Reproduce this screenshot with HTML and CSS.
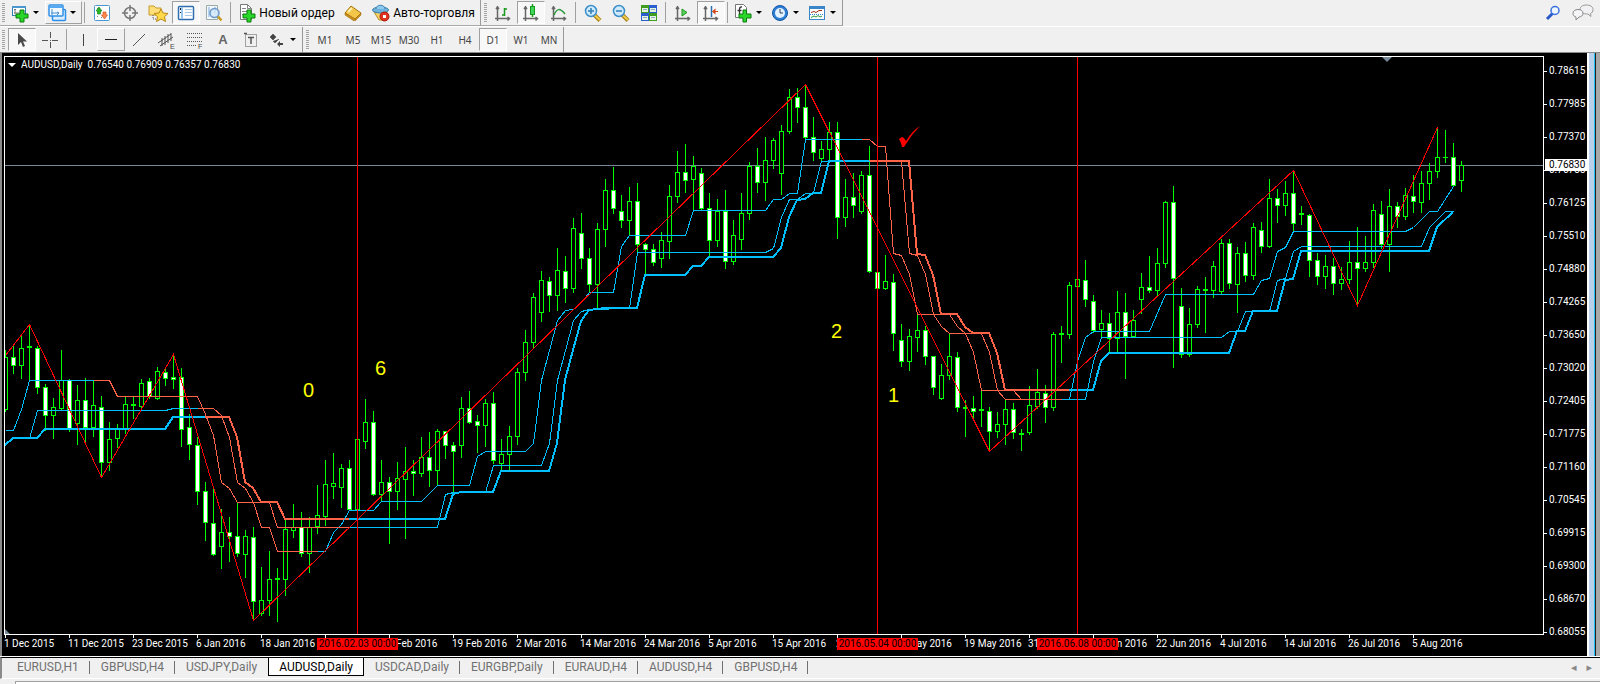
FILE: index.html
```html
<!DOCTYPE html>
<html lang="ru">
<head>
<meta charset="utf-8">
<title>AUDUSD,Daily</title>
<link rel="stylesheet" href="styles.css">
</head>
<body>
<header class="toolbars">
  <div class="toolbar">
    <div class="group">
      <span class="grip"></span>
      <button class="tool drop" aria-label="Новый график"><svg width="18" height="18"><rect x="1.500" y="2.500" width="13" height="9" fill="#fff" stroke="#2f7fb5"/><rect x="1" y="2" width="14" height="2" fill="#4a98cf"/><path d="M4 5v5M3 9h8M3 6l1-1 1 1" stroke="#777" fill="none"/><path d="M9 6h4v4h4v4h-4v4H9v-4H5v-4h4z" fill="#2bd62b" stroke="#0b7d0b"/></svg><i class="arrow"></i></button>
      <button class="tool drop raised" aria-label="Профили"><svg width="18" height="18"><rect x="4.500" y="5.500" width="13" height="11" rx="1" fill="#d9efff" stroke="#2f8fe8" stroke-width="1.500"/><rect x="1" y="1" width="14" height="11" rx="1" fill="#f0f9ff" stroke="#2f8fe8" stroke-width="1.500"/><path d="M1 3h14" stroke="#55a9ee" stroke-width="2"/><path d="M4 5v6M3 9h8M9 8l2 1-2 2" stroke="#4a90cc" fill="none"/></svg><i class="arrow"></i></button>
      <span class="sep"></span>
      <button class="tool" aria-label="Обзор рынка"><svg width="18" height="18"><rect x="1.500" y="1.500" width="15" height="15" rx="1" fill="#fff" stroke="#4a98cf"/><path d="M4 4.500h1M4 12.500h1M8 13.500h1" stroke="#888"/><path d="M3 7l3-4 3 4H7.500v3h-3V7z" fill="#2ab52a" stroke="#0b7d0b" stroke-width=".6"/><path d="M8.500 11l3 4 3-4H13V8h-3v3z" fill="#ff8a4a" stroke="#d04010" stroke-width=".6"/></svg></button>
      <button class="tool" aria-label="Окно данных"><svg width="18" height="18" fill="none" stroke="#777" stroke-width="1.500"><circle cx="9" cy="9" r="5.500"/><path d="M9 1v6M9 11v6M1 9h6M11 9h6"/></svg></button>
      <button class="tool" aria-label="Навигатор"><svg width="20" height="18"><path d="M1 2h5l2 2h5v7H1z" fill="#ffdf7a" stroke="#c79a2c"/><path d="M5 11v4h4" stroke="#555" stroke-dasharray="1 1" fill="none"/><path d="M13 5l2 4 5 .5-3.500 3.200 1 4.800-4.500-2.500-4.500 2.500 1-4.800L6 9.500 11 9z" fill="#ffd94a" stroke="#b98714"/></svg></button>
      <button class="tool pressed" aria-label="Терминал"><svg width="18" height="18"><rect x="1.500" y="2.500" width="15" height="13" rx="1" fill="#fff" stroke="#2f6fb0" stroke-width="1.500"/><path d="M5 3v12" stroke="#9bc7ee" stroke-width="2"/><path d="M3.500 4v2M3.500 8v1" stroke="#123"/><path d="M8 5.500h7M8 8.500h7M8 11.500h7" stroke="#a9c9e8"/></svg></button>
      <button class="tool" aria-label="Тестер стратегий"><svg width="18" height="18"><path d="M1.500 1.500h11v14h-11z" fill="#f4f8fc" stroke="#9aa"/><path d="M4 3v10M10 3v6" stroke="#7ad"/><circle cx="9.500" cy="9" r="4.500" fill="#cfe6fb" fill-opacity=".8" stroke="#6c98c8" stroke-width="1.500"/><path d="M13 12.500l3.500 4" stroke="#c99a22" stroke-width="2.500"/></svg></button>
      <span class="sep"></span>
      <button class="tool text order"><svg width="18" height="18"><path d="M2.500.5h7l4 4v11h-11z" fill="#fff" stroke="#777"/><path d="M9.500.5v4h4M4 4.500h4M4 7.500h7M4 10.500h5" stroke="#888" fill="none"/><path d="M9 6h4v4h4v4h-4v4H9v-4H5v-4h4z" fill="#2bd62b" stroke="#0b7d0b"/></svg><span>Новый ордер</span></button>
      <button class="tool" aria-label="MetaEditor"><svg width="18" height="18"><path d="M1 9l6-7 10 7-6 6z" fill="#f3c64a" stroke="#a87412"/><path d="M1 9v2l9 6 1-2zM11 15l6-6v2l-6 6z" fill="#c98f1d" stroke="#a87412" stroke-width=".6"/><path d="M4 8l4-4" stroke="#fff0b0" stroke-width="2"/></svg></button>
      <button class="tool text auto"><svg width="18" height="18"><path d="M2 8h13l-3 8H7z" fill="#f5d36b" stroke="#b98a1f"/><ellipse cx="8.500" cy="6" rx="8" ry="3" fill="#6fb3dc" stroke="#3a7fac"/><path d="M4 5c0-5 9-5 9 0" fill="#8ccaf0" stroke="#3a7fac"/><circle cx="12.500" cy="12.500" r="4.500" fill="#e3311d" stroke="#a51b0c"/><path d="M11 11h3v3h-3z" fill="#fff"/></svg><span>Авто-торговля</span></button>
    </div>
    <div class="group">
      <span class="grip"></span>
      <button class="tool" aria-label="Бары"><svg width="18" height="18" fill="none" stroke="#666" stroke-width="1.500"><path d="M3.500 2v15M1 14.500h15M2 5l1.500-2L5 5M13.500 13l2 1.500-2 2"/><path d="M10.500 4v8M10 5h3M8 11h3" stroke="#1a9a1a"/></svg></button>
      <button class="tool pressed" aria-label="Свечи"><svg width="18" height="18" fill="none" stroke="#666" stroke-width="1.500"><path d="M3.500 2v15M1 14.500h15M2 5l1.500-2L5 5M13.500 13l2 1.500-2 2"/><path d="M10.500 0v13" stroke="#1a9a1a"/><rect x="8.500" y="2.500" width="4" height="8" fill="#3fd45c" stroke="#1a9a1a" stroke-width="1"/></svg></button>
      <button class="tool" aria-label="Линия"><svg width="18" height="18" fill="none" stroke="#666" stroke-width="1.500"><path d="M3.500 2v15M1 14.500h15M2 5l1.500-2L5 5M13.500 13l2 1.500-2 2"/><path d="M4 11c3-7 6-7 11-1" stroke="#2a9a3a"/></svg></button>
      <span class="sep"></span>
      <button class="tool" aria-label="Увеличить"><svg width="18" height="18"><path d="M10 10.500l6 6" stroke="#a8821c" stroke-width="4"/><path d="M10 10.500l6 5.500" stroke="#f0cc4a" stroke-width="2"/><circle cx="7" cy="7" r="5.500" fill="#cfeafc" stroke="#3b8fc9" stroke-width="1.500"/><path d="M4 7h6M7 4v6" stroke="#2f7fb8" stroke-width="1.500"/></svg></button>
      <button class="tool" aria-label="Уменьшить"><svg width="18" height="18"><path d="M10 10.500l6 6" stroke="#a8821c" stroke-width="4"/><path d="M10 10.500l6 5.500" stroke="#f0cc4a" stroke-width="2"/><circle cx="7" cy="7" r="5.500" fill="#cfeafc" stroke="#3b8fc9" stroke-width="1.500"/><path d="M4 7h6" stroke="#2f7fb8" stroke-width="1.500"/></svg></button>
      <button class="tool" aria-label="Окна мозаикой"><svg width="18" height="18"><path d="M1 1h8v8H1zM9 9h8v8H9z" fill="#3f9e1e"/><path d="M9 1h8v8H9zM1 9h8v8H1z" fill="#2b5fd0"/><path d="M2 4h6v4H2zM10 4h6v4h-6zM2 12h6v4H2zM10 12h6v4h-6z" fill="#e6f4e6"/><path d="M3 5.500h4M11 5.500h4M3 13.500h4M11 13.500h4" stroke="#8ab"/></svg></button>
      <span class="sep"></span>
      <button class="tool" aria-label="Автопрокрутка"><svg width="18" height="18" fill="none" stroke="#666" stroke-width="1.500"><path d="M3.500 2v15M1 14.500h15M2 5l1.500-2L5 5M13.500 13l2 1.500-2 2"/><path d="M8 5l5 3.500L8 12z" fill="#5fd05f" stroke="#1a9a1a" stroke-width="1"/></svg></button>
      <button class="tool pressed" aria-label="Сдвиг графика"><svg width="18" height="18" fill="none" stroke="#666" stroke-width="1.500"><path d="M3.500 2v15M1 14.500h15M2 5l1.500-2L5 5M13.500 13l2 1.500-2 2"/><path d="M9.500 2v11" stroke="#2a70b0"/><path d="M16 7.500h-4M13.500 5l-3 2.500 3 2.500" stroke="#d04818" fill="#d04818" stroke-width="1"/></svg></button>
      <span class="sep"></span>
      <button class="tool drop" aria-label="Индикаторы"><svg width="18" height="18"><path d="M1.500.5h8l3 3v10h-11z" fill="#fff" stroke="#777"/><path d="M8 3c-2-.5-2.500 1-2.500 2.500V11M3.500 6.500h4" stroke="#333" fill="none" stroke-width="1.300"/><path d="M9 6h3.500v4H17v4h-4.500v4H9v-4H5v-4h4z" fill="#2bd62b" stroke="#0b7d0b"/></svg><i class="arrow"></i></button>
      <button class="tool drop" aria-label="Периоды"><svg width="18" height="18"><circle cx="9" cy="9" r="7.500" fill="#2d7fd6" stroke="#1558a6"/><circle cx="9" cy="9" r="5" fill="#e4f2ff"/><path d="M9 5v4h3" stroke="#345" fill="none"/></svg><i class="arrow"></i></button>
      <button class="tool drop" aria-label="Шаблоны"><svg width="18" height="18"><rect x="1.500" y="2.500" width="15" height="13" fill="#fff" stroke="#3b86c8"/><path d="M1 3.500h16" stroke="#3b86c8" stroke-width="3"/><path d="M3 8.500l3-1 2 1 3-2 3 0" stroke="#a03018" fill="none"/><path d="M3 13.500l3-1.500 2 1 2-1.500 2 1.500 2-1" stroke="#2a9a3a" fill="none"/><path d="M2 10.500h14" stroke="#3b86c8" stroke-dasharray="1 1"/></svg><i class="arrow"></i></button>
    </div>
    <div class="corner">
      <button class="tool" aria-label="Поиск"><svg width="18" height="18" fill="none"><path d="M3 15l6-6" stroke="#2a58c8" stroke-width="3"/><circle cx="11" cy="6.500" r="4" fill="#eef5ff" stroke="#3a70dc" stroke-width="1.500"/></svg></button>
      <button class="tool" aria-label="Сообщения"><svg width="22" height="18"><path d="M14 1c4 0 7 1.500 7 4.500 0 2-1 3.500-2.500 4l.5 3-3-2.500c-5 0-8-1.500-8-4.500S11 1 14 1z" fill="#f2f2f5" stroke="#999"/><path d="M6 5.500c3 0 5 1.200 5 3.700S9 13 7 13l-3 3v-3c-2-.5-3-1.800-3-3.800s2-3.700 5-3.700z" fill="#f5f5f8" stroke="#888"/></svg></button>
    </div>
  </div>
  <div class="toolbar second">
    <div class="group">
      <span class="grip"></span>
      <button class="tool pressed" aria-label="Курсор"><svg width="18" height="18"><path d="M5 2v12l3-3 2 5 2-1-2-4.500h4z" fill="#4a4a4a"/></svg></button>
      <button class="tool" aria-label="Перекрестие"><svg width="18" height="18" stroke="#555"><path d="M9.500 1v6M9.500 11v6M1 9.500h6M11 9.500h6M9 9.500h1"/></svg></button>
      <span class="sep"></span>
      <button class="tool" aria-label="Вертикальная линия"><svg width="18" height="18" stroke="#444"><path d="M9.500 3v12"/></svg></button>
      <button class="tool raised" aria-label="Горизонтальная линия"><svg width="18" height="18" stroke="#222"><path d="M3 8.500h12"/></svg></button>
      <button class="tool" aria-label="Трендовая линия"><svg width="18" height="18" stroke="#555"><path d="M3 15L15 3"/></svg></button>
      <button class="tool" aria-label="Канал"><svg width="20" height="18" stroke="#555" fill="none"><path d="M1 12L14 3M3 15L16 6M5 7v8M8 5v9M11 3v9M14 2v8"/><text class="glyph" x="13" y="18">E</text></svg></button>
      <button class="tool" aria-label="Фибоначчи"><svg width="20" height="18" stroke="#555"><path d="M2 2.500h15M2 6.500h15M2 10.500h15M2 14.500h9" stroke-dasharray="1 1"/><text class="glyph" x="13" y="18">F</text></svg></button>
      <button class="tool letter">A</button>
      <button class="tool" aria-label="Метка"><svg width="18" height="18" stroke="#555" fill="none"><rect x="3.500" y="3.500" width="11" height="12" stroke-dasharray="1 1"/><path d="M2 2.500h3M6 6.500h6M9 6v7" stroke-width="1.500"/></svg></button>
      <button class="tool drop" aria-label="Стрелки"><svg width="18" height="18" fill="#444"><path d="M2 6l3-3 3 3-3 3zM5 10l2 2 4-4" stroke="#444" stroke-width=".6"/><path d="M9 13l3-3v2h3v2h-3v2z"/></svg><i class="arrow"></i></button>
    </div>
    <div class="group">
      <span class="grip"></span>
      <button class="tool period">M1</button><button class="tool period">M5</button><button class="tool period">M15</button><button class="tool period">M30</button><button class="tool period">H1</button><button class="tool period">H4</button><button class="tool period pressed">D1</button><button class="tool period">W1</button><button class="tool period">MN</button>
    </div>
  </div>
</header>
<main class="workspace">
  <section class="chart">
    <div class="plot">
      <svg class="canvas" id="canvas" width="100%" height="100%"></svg>
      <p class="caption"><i class="arrow"></i><span>AUDUSD,Daily</span><span>0.76540 0.76909 0.76357 0.76830</span></p>
    </div>
    <div class="prices" id="prices"></div>
    <div class="dates" id="dates"></div>
  </section>
  <div class="edge"></div>
</main>
<nav class="tabs">
  <button class="tab">EURUSD,H1</button><button class="tab">GBPUSD,H4</button><button class="tab before">USDJPY,Daily</button><button class="tab active">AUDUSD,Daily</button><button class="tab">USDCAD,Daily</button><button class="tab">EURGBP,Daily</button><button class="tab">EURAUD,H4</button><button class="tab">AUDUSD,H4</button><button class="tab">GBPUSD,H4</button>
  <span class="scroll"><button aria-label="Назад">◂</button><button aria-label="Вперёд">▸</button></span>
</nav>
<footer class="panel"><div class="panel-head"></div></footer>
<script src="chart.js"></script>
</body>
</html>
```
FILE: styles.css
```css
* { box-sizing: border-box; }
body { margin: 0; min-height: 100vh; display: flex; flex-direction: column; background: #f0f0f0; font-family: "Noto Sans", sans-serif; overflow: hidden; }
button { font: inherit; color: inherit; background: none; border: 0; padding: 0; margin: 0; }
.toolbars { border-bottom: 1px solid #8a8a8a; }
.toolbar { display: flex; height: 26px; }
.second { border-top: 1px solid #fff; }
.group { display: flex; align-items: center; border-right: 1px solid #999; border-bottom: 1px solid #a8a8a8; padding-left: 2px; }
.second .group { border-bottom: 0; }
.toolbar .group + .group { padding-left: 3px; }
.grip { width: 3px; height: 20px; margin-right: 3px; background: repeating-linear-gradient(#a4a4a4 0 1px, #f0f0f0 1px 2px); }
.group + .group .grip { margin-right: 2px; }
.tool { width: 28px; height: 23px; display: flex; align-items: center; justify-content: center; flex: none; }
.tool svg { flex: none; overflow: visible; }
.drop { width: 37px; gap: 4px; padding-right: 3px; }
.arrow { width: 0; height: 0; border: 3px solid transparent; border-top-color: #000; border-bottom: 0; }
.raised { border: 1px solid #fff; border-right-color: #a0a0a0; border-bottom-color: #a0a0a0; }
.pressed { border: 1px solid #a0a0a0; border-right-color: #fff; border-bottom-color: #fff; background: #f8f8f8; }
.sep { width: 1px; height: 21px; background: #a0a0a0; margin: 0 3px 0 2px; }
.second .sep { margin: 0 2px; }
.text { gap: 3px; font: 12px Roboto, sans-serif; color: #000; }
.order { width: 105px; }
.auto { width: 113px; }
.corner { margin-left: auto; display: flex; align-items: center; padding-right: 3px; gap: 2px; }
.glyph { font-family: "Liberation Sans", sans-serif; font-size: 7px; fill: #444; stroke: none; }
.letter { font-family: "Liberation Sans", sans-serif; font-weight: 700; font-size: 13px; color: #666; }
.period { font-size: 10px; color: #444; }

.workspace { flex: 1; display: flex; min-height: 300px; border-left: 2px solid #8a8a8a; }
.chart { flex: 1; min-width: 0; background: #000; padding: 3px 0 4px 2px; display: grid; grid-template: minmax(0, 1fr) 18px / minmax(0, 1fr) 43px; }
.plot { position: relative; border: 1px solid #fff; overflow: hidden; }
.canvas { display: block; position: absolute; inset: 0; }
.caption { position: relative; margin: 0 3px; display: flex; align-items: center; gap: 5px; color: #fff; font: 10px/15px Roboto, sans-serif; }
.caption .arrow { border-width: 4px; border-top-color: #fff; border-bottom: 0; }
.prices { position: relative; color: #fff; font: 10px/12px Roboto, sans-serif; }
.price { position: absolute; left: 0; display: flex; align-items: center; gap: 2px; }
.price::before { content: ""; width: 3px; height: 1px; background: #fff; }
.current { left: 1px; right: 0; padding-left: 4px; background: #fff; color: #000; }
.current::before { content: none; }
.dates { position: relative; grid-column: 1 / 3; color: #fff; font: 10px/12px Roboto, sans-serif; white-space: nowrap; }
.date { position: absolute; top: 0; padding-top: 3px; }
.date::before { content: ""; position: absolute; left: 1px; top: 0; width: 1px; height: 3px; background: #fff; }
.mark { position: absolute; top: 3px; width: 81px; text-align: center; background: #f00; color: #000; }
.edge { width: 13px; background: linear-gradient(90deg, #fff 0 2px, #b8d0ea 2px 7px, #20c0f0 7px 8px, #222 8px 9px, #a8a8a8 9px); }

.tabs { display: flex; height: 22px; border-top: 1px solid #000; box-shadow: 0 -1px #fff; border-bottom: 1px solid #fff; border-left: 2px solid #8a8a8a; padding-left: 4px; font: 12px Roboto, sans-serif; color: #707070; }
.tab { padding: 0 11px; height: 18px; line-height: 18px; position: relative; }
.tab::after { content: ""; position: absolute; right: 0; top: 3px; width: 1px; height: 13px; background: #707070; }
.before::after, .active::after { content: none; }
.active { background: #fff; color: #000; border: 1px solid #000; border-top: 0; padding: 0 10px; }
.scroll { margin-left: auto; display: flex; gap: 10px; padding-right: 8px; font: 11px/16px "DejaVu Sans", sans-serif; color: #888; }
.panel { padding: 2px 0 0 15px; }
.panel-head { height: 3px; border-top: 1px solid #a0a0a0; border-left: 1px solid #a0a0a0; background: #fff; }
```
FILE: chart.js
```js
const NS = 'http://www.w3.org/2000/svg';
const LEFT = 5, TOP = 57, STEP = 8;
const svg = document.getElementById('canvas');
const root = document.createElementNS(NS, 'g');
root.setAttribute('transform', `translate(${-LEFT} ${-TOP})`);
svg.appendChild(root);

function add(tag, attrs, text) {
  const el = document.createElementNS(NS, tag);
  for (const k in attrs) el.setAttribute(k, attrs[k]);
  if (text) el.textContent = text;
  root.appendChild(el);
  return el;
}

// high, body top, body bottom, low; a trailing f marks a falling candle
const candles = `350 357 409 411,346 357 365 373f,334 348 365 378,324 346 347 381,346 348 387 393f,384 387 415 430f,398 407 415 438,350 380 408 410,379 380 428 431f,385 400 423 444,378 400 427 442f,380 405 427 436,396 407 462 477f,422 439 462 470,424 429 438 447,397 404 429 433,397 404 405 418,379 383 406 408,378 381 396 398f,367 371 398 399,368 372 378 385f,354 377 379 388f,368 377 429 446f,414 427 444 459f,437 445 491 504f,482 491 522 540f,489 523 554 555f,509 532 546 568,517 532 536 561f,502 536 553 556f,530 536 554 577,527 537 601 620f,567 600 613 615,551 579 600 615,568 578 579 621,519 529 579 595,504 527 530 537,512 527 553 556f,517 527 553 572,485 515 526 533,460 484 516 525,453 483 486 498,464 468 487 507,460 468 509 510f,439 439 509 510,399 422 441 448,411 422 494 495f,460 482 494 501,477 482 491 543f,462 478 491 509,447 471 479 538,460 471 473 495f,437 457 473 476,432 457 470 486f,429 431 470 484,431 431 445 458f,442 445 451 493f,397 408 445 457,391 408 422 423f,415 421 425 452f,399 403 425 446,392 403 460 463f,439 454 463 471,426 436 454 470,368 372 436 444,330 342 372 380,293 297 342 348,271 280 312 321,277 281 295 311f,248 270 295 310,256 271 288 302f,218 228 288 292,213 233 258 268f,248 258 284 292f,223 229 284 308,179 190 229 246,167 190 208 213f,195 211 220 227f,187 201 220 235,183 201 244 252f,243 244 249 275f,244 249 262 265f,232 240 258 267,185 196 241 258,151 172 196 202,144 172 180 192f,156 166 179 210,168 173 208 210f,193 208 240 257f,199 211 240 246,190 211 261 268f,220 235 261 264,193 213 239 249,162 166 213 219,148 166 182 192f,137 160 182 200,138 140 160 168,125 131 173 194,89 97 131 133,88 97 107 122f,84 107 137 139f,117 137 152 160f,141 149 158 161,122 132 149 159,122 132 217 238f,179 197 217 226,173 197 205 217f,171 175 211 213,146 175 271 272f,272 272 288 289f,255 281 288 289,274 282 333 350f,324 340 361 366f,329 336 361 370,314 330 337 351,326 330 356 364f,356 356 387 394f,364 375 398 399,333 356 375 379,352 357 407 411f,400 407 408 436,396 408 411 417f,390 409 410 426,407 411 431 451f,412 424 431 437,399 409 424 444,403 409 432 438f,429 433 434 450,386 405 432 434,369 392 406 408,385 393 407 422f,332 334 407 410,326 333 334 362,282 285 334 338,278 279 286 287,260 280 299 306f,295 301 330 332f,310 323 329 337,313 323 338 353f,291 312 338 353,293 312 336 378f,310 320 336 337,273 287 299 313,256 287 290 292f,248 263 290 295,201 202 263 267,186 202 278 367f,288 306 354 357f,308 324 354 356,286 289 324 327,277 289 290 332,261 266 290 297,239 243 291 293,239 243 283 288f,247 253 284 312,242 253 275 281f,223 227 275 279,222 230 246 252f,179 198 246 247,189 198 205 222f,181 193 205 215,170 193 223 231f,206 213 214 224,214 215 260 276f,253 260 276 284f,255 266 276 288,258 266 283 294f,267 279 283 289,241 262 279 283,227 262 268 305f,236 262 268 271,204 210 262 267,201 214 244 248f,189 206 244 271,202 206 216 227f,188 195 216 219,175 196 201 212f,171 183 202 212,163 171 183 199,127 157 171 177,130 157 157 162,143 157 185 186f,161 165 180 191`;

const C = '#00bfff', O = '#ff6347';
const lines = [
  [C, 2, '5,445 13,438 37,438 45,429 165,429 173,417 205,417'],
  [O, 2, '205,417 229,417 237,437 245,482 253,488 261,502 277,502 285,519 349,519'],
  [C, 2, '349,519 445,519 453,494 461,492 493,492 501,471 549,471 557,443 565,380 573,350 581,321 589,310 605,308 637,308 645,275 685,275 693,266 701,266 709,257 773,257 781,248 789,217 797,200 805,199 813,193 821,193 829,161 869,161'],
  [O, 2, '869,161 909,161 917,254 925,255 933,275 941,314 957,314 965,327 973,333 989,333 997,353 1005,390 1069,390'],
  [C, 2, '1069,390 1093,390 1101,361 1109,353 1229,353 1237,331 1245,331 1253,311 1277,311 1285,280 1293,279 1301,251 1429,251 1437,227 1453,212'],
  [C, 1, '5,430 13,430 21,409 29,380 93,380'],
  [O, 1, '93,380 109,380 117,396 197,396 205,414 213,435 221,482 229,488 237,502 253,502 261,527 269,527 277,551 317,551'],
  [C, 1, '317,551 325,551 333,532 341,524 349,510 373,510 381,501 421,501 437,485 469,485 477,456 485,451 525,451 533,443 541,380 549,350 557,320 565,310 573,309 581,302 589,292 613,292 621,246 629,235 685,235 693,210 765,210 773,199 781,199 789,193 797,193 805,139 861,139'],
  [O, 1, '861,139 869,139 877,146 885,146 893,253 901,255 909,274 917,314 933,314 941,326 949,333 965,333 973,352 981,390 997,390 1005,399 1061,399'],
  [C, 1, '1061,399 1069,399 1077,361 1085,337 1093,331 1149,331 1165,294 1253,294 1261,280 1269,278 1277,251 1285,247 1293,231 1405,231 1413,227 1429,211 1437,211 1453,186'],
  [C, 1, '29,438 37,410 165,410 173,408 197,408'],
  [O, 1, '197,408 213,408 221,415 229,437 237,482 245,488 253,502 269,502 277,527 349,527'],
  [C, 1, '349,527 437,527 445,494 453,492 485,492 493,465 541,465 549,443 557,380 565,350 573,320 581,311 589,309 629,308 637,252 765,252 773,248 781,217 789,199 797,199 805,193 813,193 821,161 869,161'],
  [O, 1, '869,161 901,161 909,253 917,255 925,274 933,314 949,314 957,326 965,333 981,333 989,352 997,390 1013,390 1021,399 1061,399'],
  [C, 1, '1061,399 1085,399 1093,361 1101,337 1221,337 1229,331 1237,331 1245,311 1269,311 1277,280 1285,278 1293,251 1301,246 1421,246 1429,227 1445,211 1453,211'],
  ['#ff0000', 1, '5,355 29,324 101,477 173,354 253,620 805,84 989,451 1293,170 1357,305 1437,127']
];

add('rect', { x: LEFT, y: 165, width: '100%', height: 1, fill: '#778899' });

candles.split(',').forEach((row, i) => {
  const [high, top, bottom, low] = row.split(' ').map(v => parseInt(v, 10));
  const x = LEFT + i * STEP;
  add('rect', { x, y: high, width: 1, height: low - high + 1, fill: '#00ff00' });
  add('rect', { x: x - 2, y: top, width: 5, height: bottom - top + 1, fill: '#00ff00' });
  if (bottom - top > 1)
    add('rect', { x: x - 1, y: top + 1, width: 3, height: bottom - top - 1, fill: row.endsWith('f') ? '#fff' : '#000' });
});

for (const [stroke, width, points] of lines)
  add('polyline', {
    points, stroke, fill: 'none', 'stroke-width': width, 'shape-rendering': 'crispEdges',
    transform: width === 1 ? 'translate(.5 .5)' : 'translate(0 0)'
  });

for (const x of [357, 877, 1077])
  add('rect', { x, y: TOP, width: 1, height: '100%', fill: '#ff0000' });

add('path', { d: 'M1382 57h10l-5 5z', fill: '#778899' });
add('path', { d: 'M5 629v5h5z', fill: '#778899' });
add('path', { d: 'M899 139l3-2 2 1 2 3q6-10 14-15q-8 8-14 18l-2 3h-2q-1-5-3-8z', fill: '#ff0000' });

for (const [x, y, n] of [[303, 397, '0'], [375, 375, '6'], [831, 338, '2'], [888, 402, '1']])
  add('text', { x, y, fill: '#ffff00', 'font-family': 'Liberation Sans, sans-serif', 'font-size': 20 }, n);

const scale = '0.78615 0.77985 0.77370 0.76755 0.76125 0.75510 0.74880 0.74265 0.73650 0.73020 0.72405 0.71775 0.71160 0.70545 0.69915 0.69300 0.68670 0.68055'.split(' ');
const prices = document.getElementById('prices');
function label(parent, cls, prop, value, text) {
  const el = document.createElement('span');
  el.className = cls;
  el.style[prop] = value + 'px';
  el.textContent = text;
  parent.appendChild(el);
}
scale.forEach((p, i) => label(prices, 'price', 'top', 9 + 33 * i, p));
label(prices, 'price current', 'top', 103, '0.76830');

const dates = document.getElementById('dates');
['1 Dec 2015', '11 Dec 2015', '23 Dec 2015', '6 Jan 2016', '18 Jan 2016', '28 Jan 2016', '9 Feb 2016', '19 Feb 2016', '2 Mar 2016', '14 Mar 2016', '24 Mar 2016', '5 Apr 2016', '15 Apr 2016', '27 Apr 2016', '9 May 2016', '19 May 2016', '31 May 2016', '10 Jun 2016', '22 Jun 2016', '4 Jul 2016', '14 Jul 2016', '26 Jul 2016', '5 Aug 2016']
  .forEach((d, i) => label(dates, 'date', 'left', 64 * i, d));
[['2016.02.03 00:00', 313], ['2016.05.04 00:00', 833], ['2016.06.08 00:00', 1033]]
  .forEach(([d, x]) => label(dates, 'mark', 'left', x, d));
```
